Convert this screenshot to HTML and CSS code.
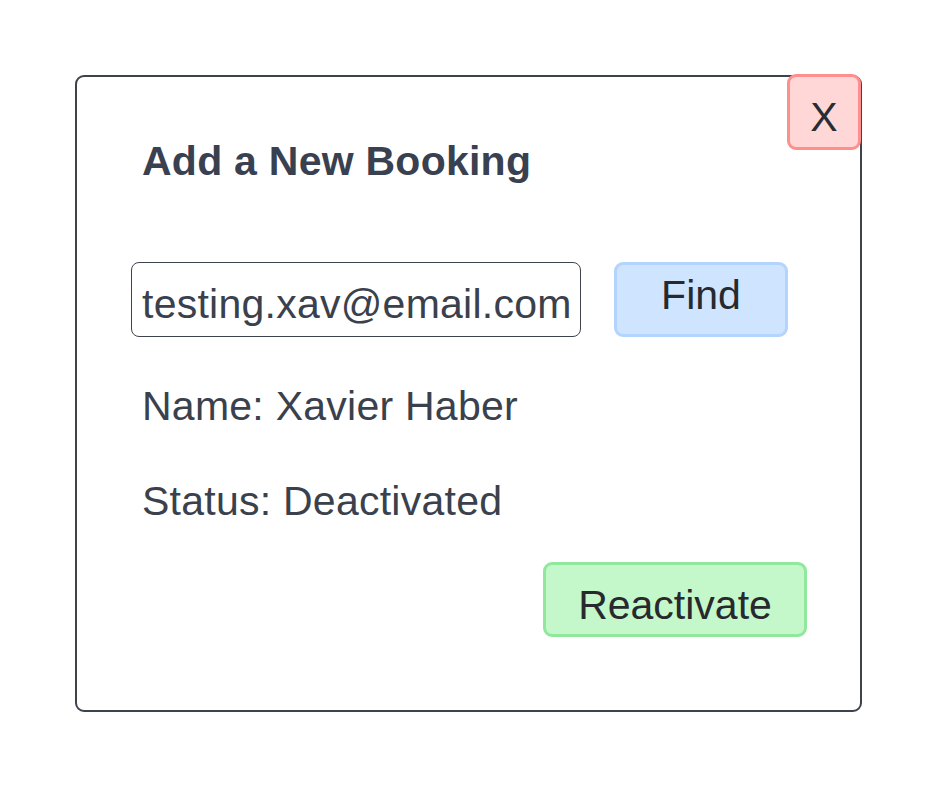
FILE: index.html
```html
<!DOCTYPE html>
<html lang="en">
<head>
<meta charset="utf-8">
<title>Add a New Booking</title>
<link rel="stylesheet" href="styles.css">
</head>
<body>
<div class="page">
  <div class="card">
    <button class="close" type="button">X</button>
    <h1 class="title">Add a New Booking</h1>
    <div class="search-row">
      <div class="field">testing.xav@email.com</div>
      <button class="btn btn-find" type="button">Find</button>
    </div>
    <p class="info info-name">Name: Xavier Haber</p>
    <p class="info info-status">Status: Deactivated</p>
    <div class="actions">
      <button class="btn btn-reactivate" type="button">Reactivate</button>
    </div>
  </div>
</div>
</body>
</html>
```

FILE: styles.css
```css
* { box-sizing: border-box; }

html, body {
  margin: 0;
  padding: 0;
  background: #ffffff;
}

body {
  font-family: "Liberation Sans", Arial, sans-serif;
  font-size: 41px;
  line-height: 46px;
  letter-spacing: 0.25px;
  color: #3a414c;
}

.page {
  padding: 75px 0 0 75px;
}

.card {
  position: relative;
  width: 787px;
  height: 637px;
  border: 2px solid #3d424d;
  border-radius: 9px;
  padding: 61px 53px 0 54px;
}

.close {
  position: absolute;
  top: -3px;
  right: -1px;
  width: 74px;
  height: 76px;
  margin: 0;
  padding: 10px 0 0;
  border: 3px solid #ff8e8e;
  border-radius: 9px;
  background: #ffd7d7;
  color: #282c33;
  font: inherit;
  letter-spacing: 0;
  line-height: 46px;
  text-align: center;
  display: block;
}

.title {
  margin: 0;
  padding-left: 11px;
  font-size: 41px;
  font-weight: 700;
  line-height: 46px;
  color: #394150;
}

.search-row {
  display: flex;
  align-items: flex-start;
  gap: 33px;
  margin-top: 78px;
}

.field {
  width: 450px;
  height: 75px;
  border: 1.5px solid #3d424d;
  border-radius: 8px;
  padding: 17.5px 0 0 10px;
  color: #3a414c;
  white-space: nowrap;
}

.btn {
  display: block;
  margin: 0;
  font: inherit;
  line-height: 46px;
  color: #27292e;
  text-align: center;
  border-radius: 9px;
  border: 3px solid;
}

.btn-find {
  width: 174px;
  height: 75px;
  padding: 0 0 9px;
  background: #cfe4ff;
  border-color: #b2d4ff;
}

.info {
  margin: 49px 0 0;
  padding-left: 11px;
}

.info-name {
  margin-top: 46px;
}

.actions {
  display: flex;
  justify-content: flex-end;
  margin-top: 38px;
}

.btn-reactivate {
  width: 264px;
  height: 75px;
  padding: 11px 0 0;
  background: #c4f7c9;
  border-color: #8fe89b;
}
```
